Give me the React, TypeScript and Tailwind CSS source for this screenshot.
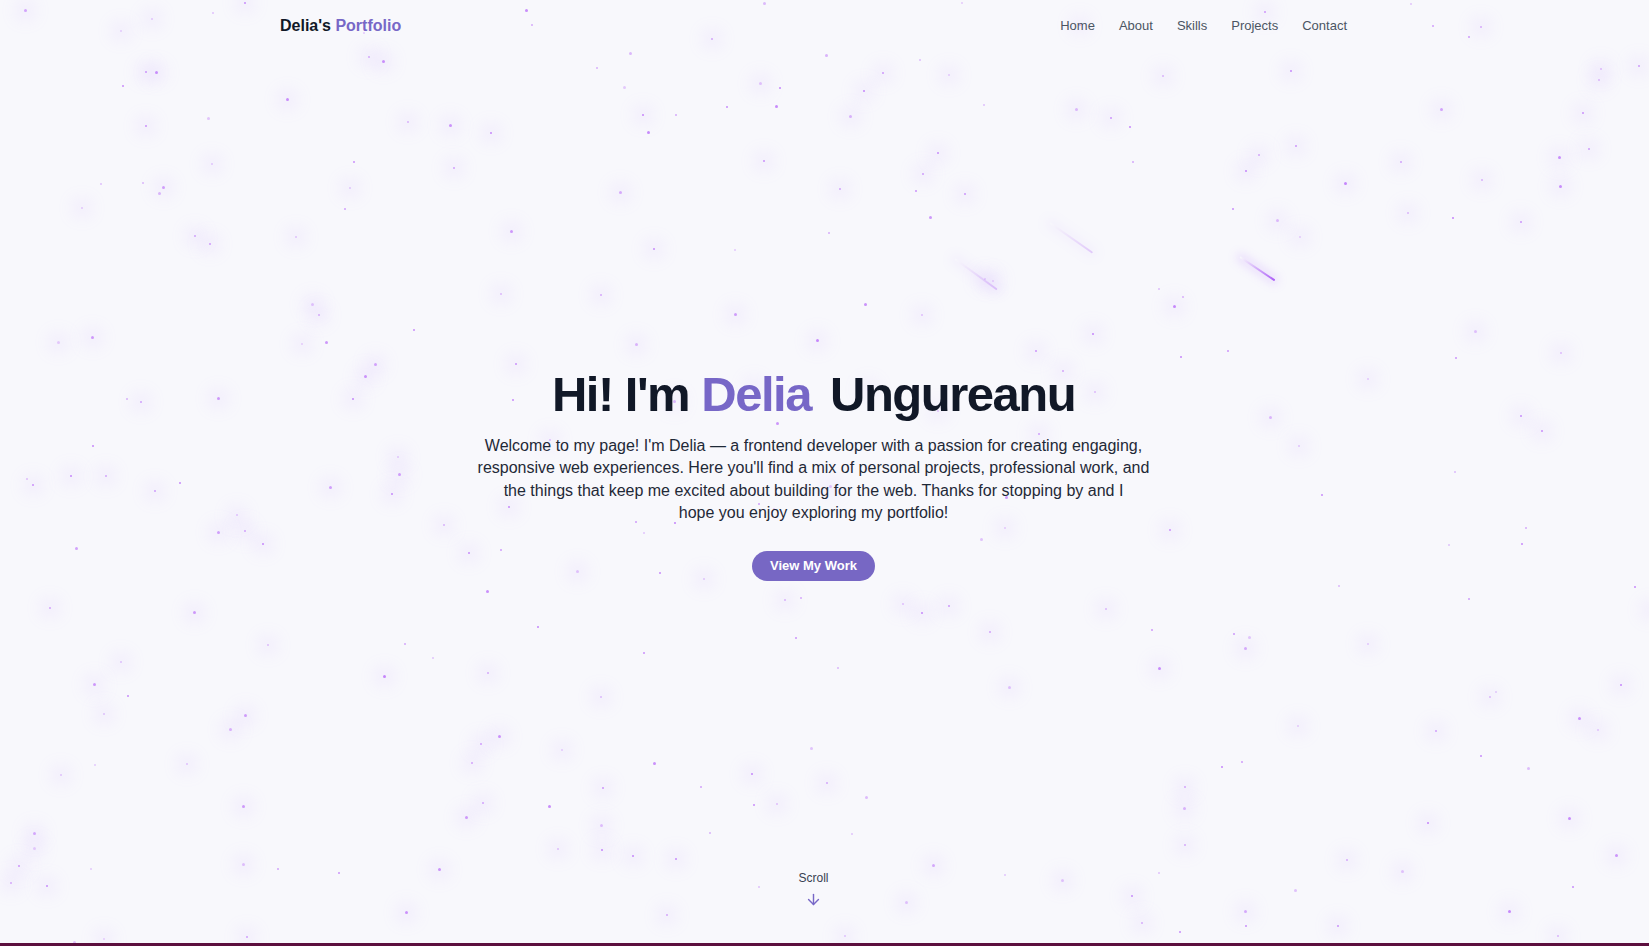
import React from "react";
import { ArrowDown } from "lucide-react";

function mulberry32(a: number) {
  return function () {
    a |= 0;
    a = (a + 0x6d2b79f5) | 0;
    let t = Math.imul(a ^ (a >>> 15), 1 | a);
    t = (t + Math.imul(t ^ (t >>> 7), 61 | t)) ^ t;
    return ((t ^ (t >>> 14)) >>> 0) / 4294967296;
  };
}

const rand = mulberry32(20240611);
const STARS = Array.from({ length: 300 }, () => {
  const x = rand() * 1649;
  const y = rand() * 946;
  const s = rand() < 0.25 ? 3 : 2;
  const a = 0.35 + rand() * 0.55;
  const halo = rand() < 0.6;
  return { x, y, s, a, halo };
});

const SHOOTING = [
  { x: 1240, y: 270, len: 42, angle: 34, op: 1 },
  { x: 955, y: 272, len: 52, angle: 36, op: 0.35 },
  { x: 1050, y: 236, len: 52, angle: 35, op: 0.3 },
];

const font = { fontFamily: '"Liberation Sans", Arial, sans-serif' };

function StarField() {
  return (
    <div className="pointer-events-none absolute inset-0 overflow-hidden">
      {STARS.map((st, i) => (
        <div
          key={i}
          className="absolute rounded-full"
          style={{
            left: st.x,
            top: st.y,
            width: st.s,
            height: st.s,
            background: `rgba(190, 118, 250, ${st.a})`,
            boxShadow: st.halo ? "0 0 16px 9px rgba(200, 160, 255, 0.1)" : undefined,
          }}
        />
      ))}
      {SHOOTING.map((sh, i) => (
        <div
          key={`s${i}`}
          className="absolute h-[2px] origin-left rounded-full"
          style={{
            left: sh.x,
            top: sh.y - 14,
            width: sh.len,
            opacity: sh.op,
            transform: `rotate(${sh.angle}deg)`,
            background: "linear-gradient(to right, rgba(255,255,255,0), rgba(168,85,247,0.95))",
            boxShadow: "0 0 10px 3px rgba(190,140,255,0.25)",
          }}
        />
      ))}
    </div>
  );
}

export default function App() {
  return (
    <div className="relative flex h-[946px] w-full flex-col overflow-hidden bg-[#f8f8fc]" style={font}>
      <StarField />
      <div className="relative flex h-[943px] flex-col">
        <header className="flex h-[50px] items-center justify-between pl-[280px] pr-[302px]">
          <div className="pt-[1px] text-[16px] font-bold leading-6 text-[#111827]">
            Delia's <span className="text-[#7767c7]">Portfolio</span>
          </div>
          <nav className="flex items-center gap-6 pt-[2px] text-[13px] leading-5 text-[#4b5563]">
            <a>Home</a>
            <a>About</a>
            <a>Skills</a>
            <a>Projects</a>
            <a>Contact</a>
          </nav>
        </header>
        <main className="flex flex-1 flex-col items-center pl-[280px] pr-[302px]">
          <div className="flex flex-col items-center pt-[320px]">
            <h1 className="text-[49px] font-bold leading-[49px] tracking-[-1.5px] text-[#111827]">
              Hi! I'm <span className="mr-[7px] text-[#7767c7]">Delia</span> Ungureanu
            </h1>
            <p className="mt-[16px] w-[690px] text-center text-[16px] leading-[22.4px] text-[#1f2937]">
              Welcome to my page! I'm Delia — a frontend developer with a passion for creating engaging,
              <br />
              responsive web experiences. Here you'll find a mix of personal projects, professional work, and
              <br />
              the things that keep me excited about building for the web. Thanks for stopping by and I
              <br />
              hope you enjoy exploring my portfolio!
            </p>
            <button className="mt-[26px] flex h-[30px] items-center rounded-full bg-[#7767c4] px-[18px] text-[13px] font-bold text-white">
              View My Work
            </button>
          </div>
          <div className="flex-1" />
          <div className="flex flex-col items-center pb-[35px]">
            <span className="text-[12px] leading-4 text-[#374151]">Scroll</span>
            <ArrowDown className="mt-[5px] h-[17px] w-[17px] text-[#7767c7]" strokeWidth={2} />
          </div>
        </main>
      </div>
      <div className="relative h-[3px] bg-[#5c0f3e]" />
    </div>
  );
}
